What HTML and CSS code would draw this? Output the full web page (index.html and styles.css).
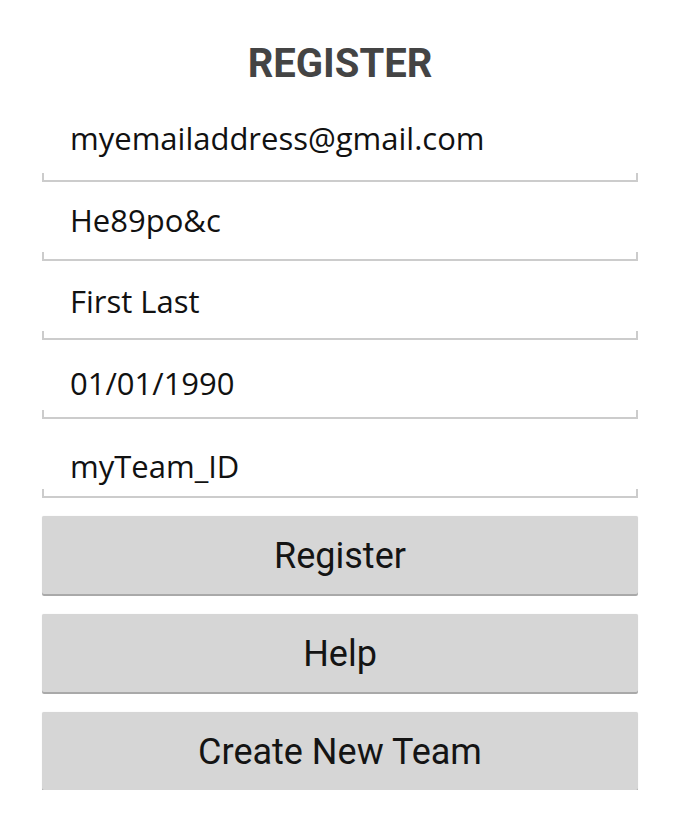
FILE: index.html
```html
<!DOCTYPE html>
<html>
<head>
<meta charset="utf-8">
<link rel="stylesheet" href="styles.css">
</head>
<body>
<div class="page">
  <h1 class="title">REGISTER</h1>
  <div class="fields">
    <div class="field"><span class="value">myemailaddress@gmail.com</span><span class="underline"></span></div>
    <div class="field"><span class="value">He89po&amp;c</span><span class="underline"></span></div>
    <div class="field"><span class="value">First Last</span><span class="underline"></span></div>
    <div class="field"><span class="value">01/01/1990</span><span class="underline"></span></div>
    <div class="field"><span class="value">myTeam_ID</span><span class="underline"></span></div>
  </div>
  <div class="buttons">
    <div class="btn">Register</div>
    <div class="btn">Help</div>
    <div class="btn">Create New Team</div>
  </div>
</div>
</body>
</html>
```
FILE: styles.css
```css
html, body {
  margin: 0;
  padding: 0;
  background: #ffffff;
}
.page {
  width: 596px;
  margin-left: 42px;
  display: flex;
  flex-direction: column;
}
.title {
  margin: 40px 0 15px 0;
  height: 48px;
  line-height: 48px;
  text-align: center;
  font-family: Roboto, "Liberation Sans", sans-serif;
  font-weight: 700;
  font-size: 40px;
  color: #444444;
}
.fields {
  display: flex;
  flex-direction: column;
}
.field {
  height: 79px;
  display: flex;
  flex-direction: column;
  justify-content: space-between;
}
.value {
  display: block;
  padding: 15px 0 0 28px;
  height: 40px;
  line-height: 40px;
  font-family: "Open Sans", "Noto Sans", sans-serif;
  font-size: 31px;
  color: #111111;
}
.field:nth-child(2) .value { padding-top: 18px; }
.field:nth-child(3) .value { padding-top: 20px; }
.field:nth-child(4) .value { padding-top: 23px; }
.field:nth-child(5) .value { padding-top: 27px; }
.underline {
  display: block;
  height: 7px;
  border-left: 2px solid #cccccc;
  border-right: 2px solid #cccccc;
  border-bottom: 2px solid #cccccc;
}
.buttons {
  margin-top: 18px;
  display: flex;
  flex-direction: column;
  gap: 20px;
}
.btn {
  height: 78px;
  line-height: 80px;
  background: #d6d6d6;
  border-radius: 2px;
  box-shadow: 0 2px 0 #a9a9a9, 0 0 1px rgba(0,0,0,0.15);
  text-align: center;
  font-family: Roboto, "Liberation Sans", sans-serif;
  font-size: 36px;
  color: #141414;
}
```
